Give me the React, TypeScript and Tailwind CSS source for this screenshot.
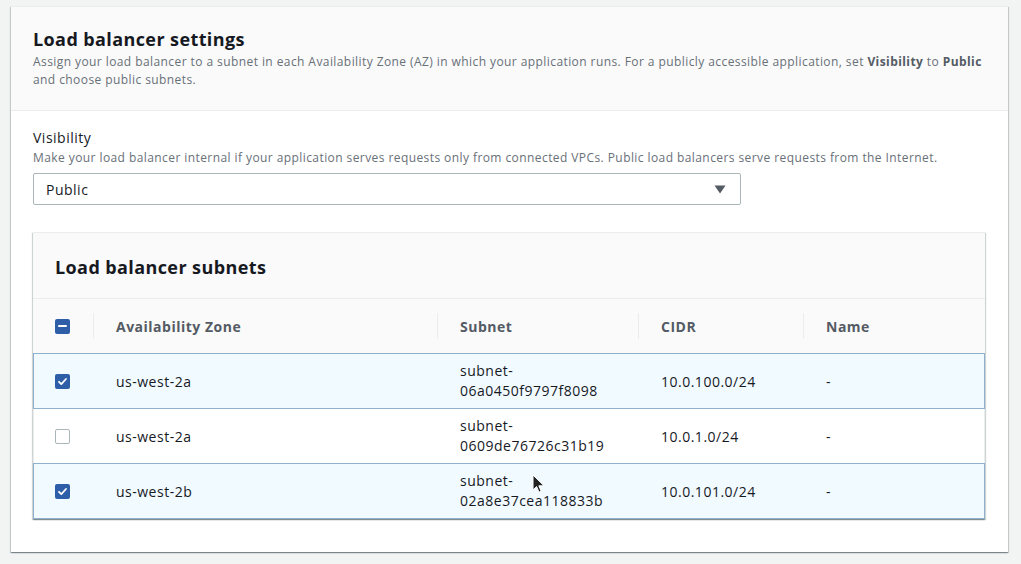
import React from "react"

type Row = { az: string, subnet: string, cidr: string, name: string, checked: boolean }

const rows: Row[] = [
  { az: "us-west-2a", subnet: "06a0450f9797f8098", cidr: "10.0.100.0/24", name: "-", checked: true },
  { az: "us-west-2a", subnet: "0609de76726c31b19", cidr: "10.0.1.0/24", name: "-", checked: false },
  { az: "us-west-2b", subnet: "02a8e37cea118833b", cidr: "10.0.101.0/24", name: "-", checked: true },
];

const Checkbox = ({ state }: { state: "checked" | "unchecked" | "mixed" }) => {
  if (state === "unchecked") {
    return <div className="w-[15px] h-[15px] rounded-[2px] border border-[#aab7b8] bg-white" />
  }
  return (
    <div className="w-[15px] h-[15px] rounded-[2px] bg-[#2f5ea9] flex items-center justify-center">
      {state === "checked" ? (
        <svg width="11" height="11" viewBox="0 0 11 11" fill="none">
          <path d="M2 5.8l2.3 2.3L9 3" stroke="white" strokeWidth="1.8" strokeLinecap="round" strokeLinejoin="round" />
        </svg>
      ) : (
        <div className="w-[9px] h-[2px] bg-white rounded-sm" />
      )}
    </div>
  )
}

const HeadCell = ({ label, first }: { label?: string, first?: boolean }) => (
  <div className="flex items-center h-full">
    {!first && <div className="w-px h-[26px] bg-[#eaeded]" />}
    {first ? <div className="pl-[22px]"><Checkbox state="mixed" /></div> : <span className="pl-[22px] font-bold text-[#545b64]">{label}</span>}
  </div>
)

const cols = "grid grid-cols-[60px_344px_201px_165px_1fr]"

export default function App() {
  return (
    <div className="min-h-[564px] bg-[#f2f3f3] pt-[6px] pl-[11px] pr-[13px] text-[14px] tracking-[0.5px] text-[#16191f]" style={{ fontFamily: '"Open Sans", "Noto Sans", sans-serif' }}>
      <div className="relative h-[546px] bg-white border-t border-[#eaeded] shadow-[0_1px_1px_0_rgba(0,28,36,0.3),1px_1px_1px_0_rgba(0,28,36,0.15),-1px_1px_1px_0_rgba(0,28,36,0.15)]">
        <div className="bg-[#fafafa] border-b border-[#eaeded] px-[22px] pt-[21px] pb-[21px]">
          <h2 className="text-[18px] leading-[22px] font-bold tracking-[0.4px]">Load balancer settings</h2>
          <p className="mt-[3px] text-[12px] leading-[18px] tracking-[0.42px] text-[#687078]">
            Assign your load balancer to a subnet in each Availability Zone (AZ) in which your application runs. For a publicly accessible application, set <b className="text-[#545b64]">Visibility</b> to <b className="text-[#545b64]">Public</b> and choose public subnets.
          </p>
        </div>

        <div className="px-[22px] pt-[17px]">
          <div className="leading-[20px]">Visibility</div>
          <div className="mt-[1px] text-[12px] leading-[18px] tracking-[0.42px] text-[#687078]">Make your load balancer internal if your application serves requests only from connected VPCs. Public load balancers serve requests from the Internet.</div>
          <div className="mt-[6px] w-[708px] h-[32px] border border-[#aab7b8] rounded-[2px] flex items-center justify-between pl-[12px] pr-[14px]">
            <span>Public</span>
            <svg width="12" height="9" viewBox="0 0 12 9"><path d="M0.5 0.5h11L6 8.5z" fill="#545b64" /></svg>
          </div>

          <div className="mt-[27px] w-[952px] shadow-[0_1px_1px_0_rgba(0,28,36,0.3),1px_1px_1px_0_rgba(0,28,36,0.15),-1px_1px_1px_0_rgba(0,28,36,0.15)] border-t border-[#eaeded]">
            <div className="bg-[#fafafa] border-b border-[#eaeded] h-[66px] flex items-center px-[22px] pt-[3px]">
              <h3 className="text-[18px] font-bold tracking-[0.4px]">Load balancer subnets</h3>
            </div>
            <div className={`${cols} bg-[#fafafa] h-[54px]`}>
              <HeadCell first />
              <HeadCell label="Availability Zone" />
              <HeadCell label="Subnet" />
              <HeadCell label="CIDR" />
              <HeadCell label="Name" />
            </div>
            {rows.map((r, i) => (
              <div key={i} className={`${cols} h-[56px] border ${i > 0 ? "-mt-px" : ""} ${r.checked ? "relative z-10 bg-[#f1faff] border-[#8fb0cc]" : "bg-white border-[#eaeded]"}`}>
                <div className="flex items-center pl-[21px]"><Checkbox state={r.checked ? "checked" : "unchecked"} /></div>
                <div className="flex items-center pl-[22px]">{r.az}</div>
                <div className="flex flex-col justify-center pl-[22px] leading-[20px]">
                  <span>subnet-</span>
                  <span>{r.subnet}</span>
                </div>
                <div className="flex items-center pl-[22px]">{r.cidr}</div>
                <div className="flex items-center pl-[22px]">{r.name}</div>
              </div>
            ))}
          </div>
        </div>

        <svg className="absolute left-[521px] top-[467px] z-20" width="13" height="20" viewBox="0 0 13 20">
          <path d="M1 1v15l3.6-3.4 2.4 5.6 2.2-1-2.4-5.4H12z" fill="#222" stroke="white" strokeWidth="1" />
        </svg>
      </div>
    </div>
  )
}
